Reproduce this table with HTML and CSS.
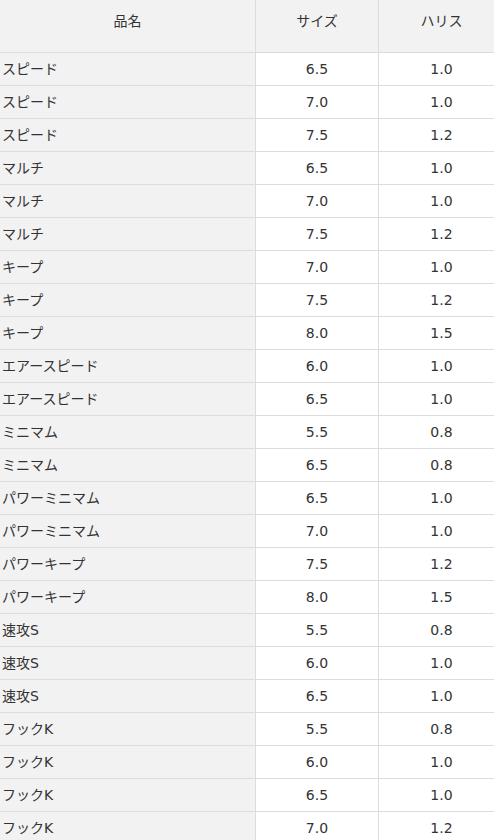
FILE: index.html
```html
<!DOCTYPE html>
<html lang="ja">
<head>
<meta charset="utf-8">
<title>表</title>
<link rel="stylesheet" href="styles.css">
</head>
<body>
<table class="spec">
  <thead>
    <tr><th class="c-name">品名</th><th class="c-size">サイズ</th><th class="c-line">ハリス</th></tr>
  </thead>
  <tbody>
    <tr><td class="name">スピード</td><td>6.5</td><td>1.0</td></tr>
    <tr><td class="name">スピード</td><td>7.0</td><td>1.0</td></tr>
    <tr><td class="name">スピード</td><td>7.5</td><td>1.2</td></tr>
    <tr><td class="name">マルチ</td><td>6.5</td><td>1.0</td></tr>
    <tr><td class="name">マルチ</td><td>7.0</td><td>1.0</td></tr>
    <tr><td class="name">マルチ</td><td>7.5</td><td>1.2</td></tr>
    <tr><td class="name">キープ</td><td>7.0</td><td>1.0</td></tr>
    <tr><td class="name">キープ</td><td>7.5</td><td>1.2</td></tr>
    <tr><td class="name">キープ</td><td>8.0</td><td>1.5</td></tr>
    <tr><td class="name">エアースピード</td><td>6.0</td><td>1.0</td></tr>
    <tr><td class="name">エアースピード</td><td>6.5</td><td>1.0</td></tr>
    <tr><td class="name">ミニマム</td><td>5.5</td><td>0.8</td></tr>
    <tr><td class="name">ミニマム</td><td>6.5</td><td>0.8</td></tr>
    <tr><td class="name">パワーミニマム</td><td>6.5</td><td>1.0</td></tr>
    <tr><td class="name">パワーミニマム</td><td>7.0</td><td>1.0</td></tr>
    <tr><td class="name">パワーキープ</td><td>7.5</td><td>1.2</td></tr>
    <tr><td class="name">パワーキープ</td><td>8.0</td><td>1.5</td></tr>
    <tr><td class="name">速攻S</td><td>5.5</td><td>0.8</td></tr>
    <tr><td class="name">速攻S</td><td>6.0</td><td>1.0</td></tr>
    <tr><td class="name">速攻S</td><td>6.5</td><td>1.0</td></tr>
    <tr><td class="name">フックK</td><td>5.5</td><td>0.8</td></tr>
    <tr><td class="name">フックK</td><td>6.0</td><td>1.0</td></tr>
    <tr><td class="name">フックK</td><td>6.5</td><td>1.0</td></tr>
    <tr><td class="name">フックK</td><td>7.0</td><td>1.2</td></tr>
  </tbody>
</table>
</body>
</html>
```
FILE: styles.css
```css
html, body {
  margin: 0;
  padding: 0;
  overflow: hidden;
  background: #ffffff;
}

.spec {
  border-collapse: separate;
  border-spacing: 0;
  table-layout: fixed;
  width: 504px;
  font-family: "DejaVu Sans", "Noto Sans CJK JP", sans-serif;
  font-size: 14px;
  color: #333333;
}

.spec th {
  font-weight: normal;
  background: #f2f2f2;
  text-align: center;
  line-height: 20px;
  padding: 11px 0 21px;
  border-bottom: 1px solid #dcdcdc;
}

.spec td {
  text-align: center;
  line-height: 20px;
  padding: 6px 0;
  border-bottom: 1px solid #dcdcdc;
  background: #ffffff;
}

.spec th + th,
.spec td + td {
  border-left: 1px solid #dcdcdc;
}

.spec .c-name { width: 255px; }
.spec .c-size { width: 122px; }
.spec .c-line { width: 125px; }

.spec td.name {
  text-align: left;
  padding-left: 2px;
  background: #f2f2f2;
}
```
